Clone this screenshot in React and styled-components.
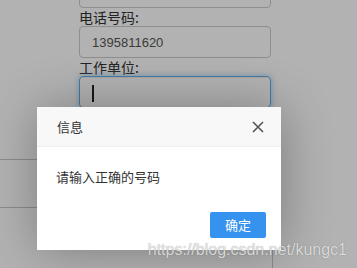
import React from 'react'
import styled, { createGlobalStyle } from 'styled-components'

const GlobalStyle = createGlobalStyle`
  html, body {
    margin: 0;
    padding: 0;
    background: #fff;
    overflow: hidden;
  }
  body {
    font-family: "Liberation Sans", Arial, "Noto Sans CJK SC", sans-serif;
    color: #333;
  }
`

const Page = styled.div`
  position: relative;
  width: 357px;
  height: 268px;
  overflow: hidden;
  background: #fff;
`

const Form = styled.div`
  margin: -24px 0 0 79px;
  width: 192px;
  display: flex;
  flex-direction: column;
`

const Label = styled.div`
  font-size: 14px;
  line-height: 18px;
  color: #333;
  font-family: "Noto Sans CJK SC", sans-serif;
`

const Field = styled.div`
  box-sizing: border-box;
  height: 32px;
  border: 1px solid ${p => (p.$focus ? '#66afe9' : '#ccc')};
  border-radius: 4px;
  padding: 0 12px;
  display: flex;
  align-items: center;
  font-size: 13px;
  color: #555;
  box-shadow: ${p => (p.$focus ? 'inset 0 1px 1px rgba(0,0,0,.075), 0 0 6px rgba(102,175,233,.6)' : 'none')};
`

const Caret = styled.span`
  display: block;
  width: 2px;
  height: 17px;
  background: #222;
  margin-top: 2px;
`

const Table = styled.div`
  margin-top: 4px;
  width: 273px;
  box-sizing: border-box;
  border-right: 1px solid #c8c8c8;
`

const Row = styled.div`
  height: ${p => p.$h}px;
  border-bottom: ${p => (p.$last ? 'none' : '1px solid #c8c8c8')};
`

const Shade = styled.div`
  position: absolute;
  inset: 0;
  background: rgba(0, 0, 0, 0.3);
`

const Dialog = styled.div`
  position: absolute;
  left: 37px;
  top: 107px;
  width: 244px;
  height: 143px;
  background: #fff;
  box-shadow: 1px 1px 50px rgba(0, 0, 0, 0.3);
  display: flex;
  flex-direction: column;
  font-family: "Noto Sans CJK SC", sans-serif;
`

const Header = styled.div`
  box-sizing: border-box;
  height: 40px;
  background: #f8f8f8;
  border-bottom: 1px solid #eee;
  display: flex;
  align-items: center;
  justify-content: space-between;
  padding: 0 16px 0 20px;
  font-size: 13px;
  color: #333;
`

const Close = styled.span`
  display: flex;
  width: 14px;
  height: 14px;
  align-items: center;
  justify-content: center;
`

const Body = styled.div`
  padding: 20px 19px;
  font-size: 13px;
  line-height: 20px;
  color: #333;
`

const Footer = styled.div`
  display: flex;
  justify-content: flex-end;
  padding: 5px 15px 12px;
`

const Button = styled.button`
  height: 26px;
  padding: 0 15px;
  border: none;
  border-radius: 2px;
  background: #3592ee;
  color: #fff;
  font-family: "Noto Sans CJK SC", sans-serif;
  font-size: 13px;
  line-height: 26px;
`

const Watermark = styled.div`
  position: absolute;
  right: 10px;
  bottom: 9px;
  font-family: "Liberation Sans", Arial, sans-serif;
  font-size: 16px;
  line-height: 18px;
  color: rgba(235, 235, 235, 0.85);
  text-shadow: 0 0 1px rgba(0, 0, 0, 0.35);
`

export default function App () {
  return (
    <Page>
      <GlobalStyle />
      <Form>
        <Field />
        <Label>电话号码:</Label>
        <Field>1395811620</Field>
        <Label>工作单位:</Label>
        <Field $focus><Caret /></Field>
      </Form>
      <Table>
        <Row $h={47} />
        <Row $h={47} />
        <Row $h={80} $last />
      </Table>
      <Shade />
      <Dialog>
        <Header>
          <span>信息</span>
          <Close>
            <svg width="12" height="12" viewBox="0 0 12 12">
              <path d="M1 1 L11 11 M11 1 L1 11" stroke="#555" strokeWidth="1.6" />
            </svg>
          </Close>
        </Header>
        <Body>请输入正确的号码</Body>
        <Footer>
          <Button>确定</Button>
        </Footer>
      </Dialog>
      <Watermark>https://blog.csdn.net/kungc1</Watermark>
    </Page>
  )
}
